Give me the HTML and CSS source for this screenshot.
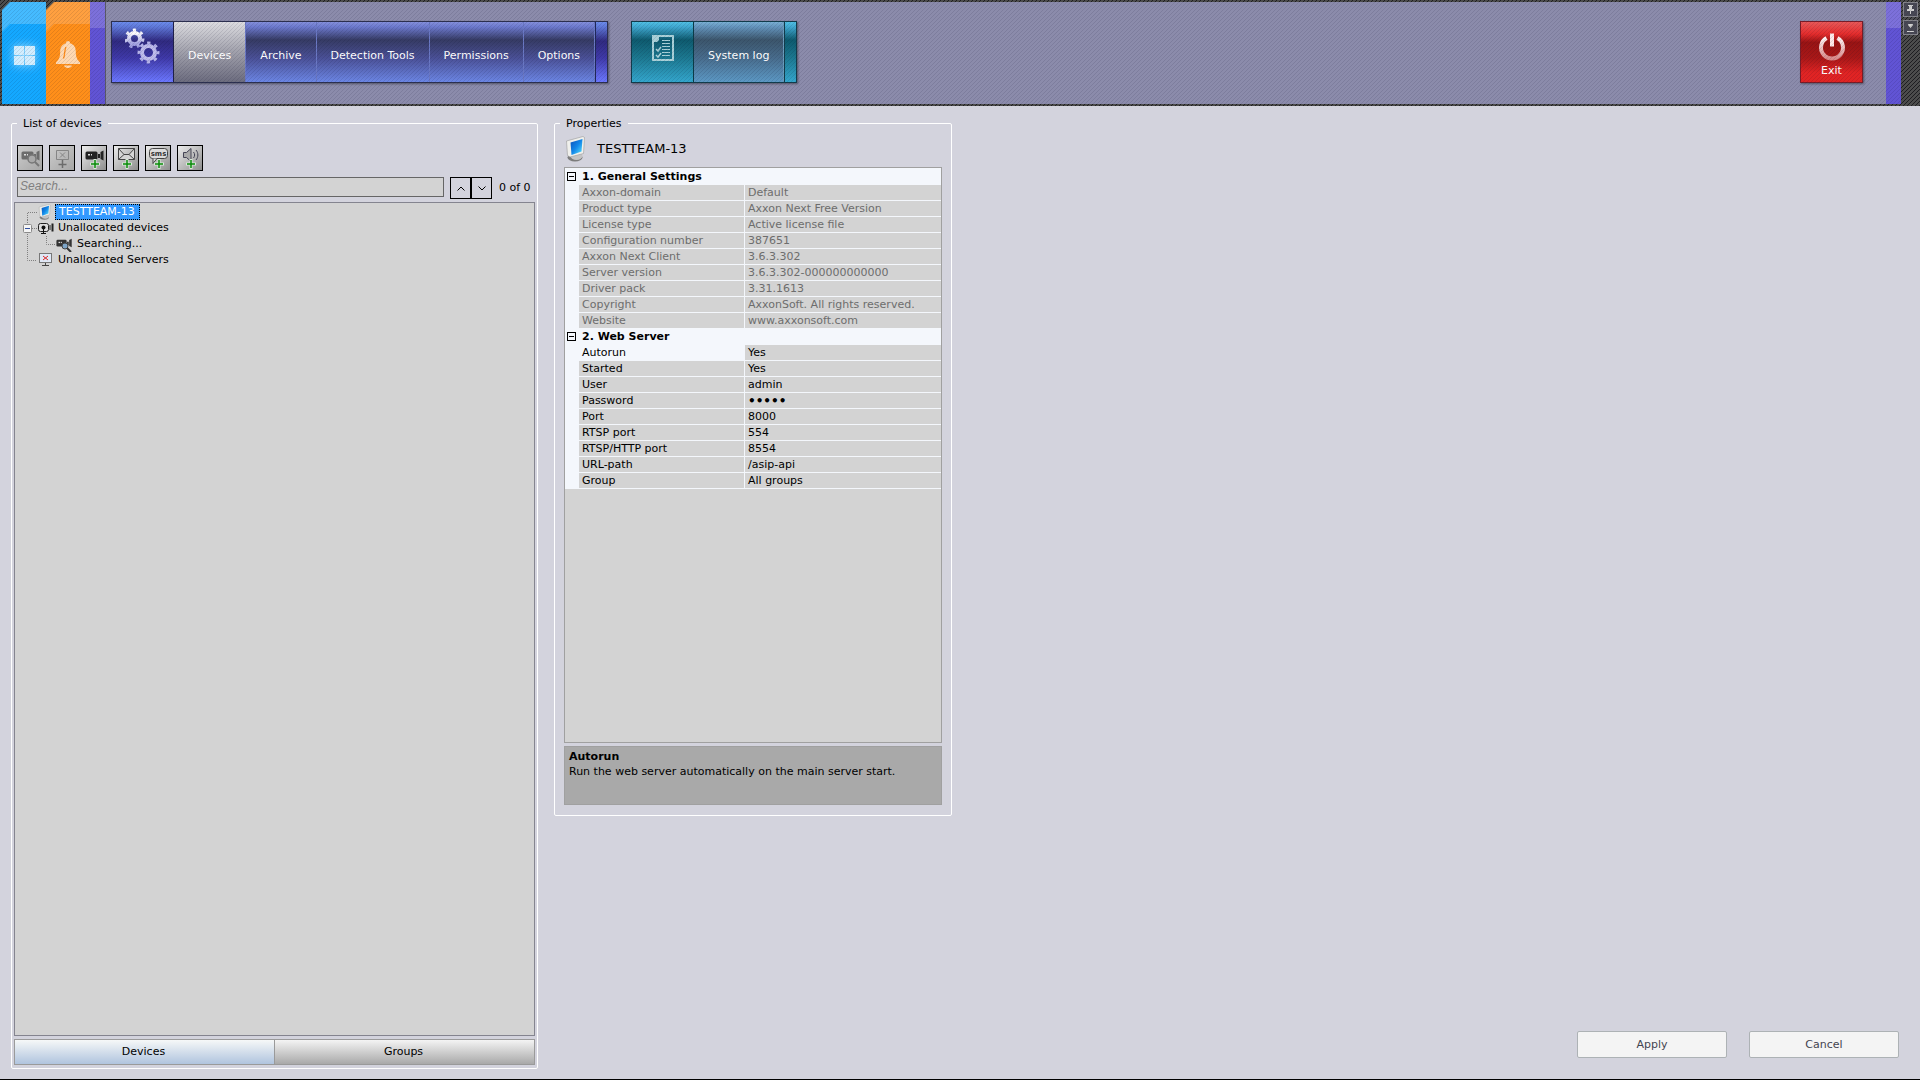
FILE: index.html
```html
<!DOCTYPE html>
<html lang="en">
<head>
  <meta charset="UTF-8"/>
  <meta name="viewport" content="width=device-width, initial-scale=1"/>
  <title>Axxon Next - Settings</title>
  <link rel="stylesheet" href="styles.css">
</head>
<body>
  <svg class="defs" width="0" height="0" aria-hidden="true">
    <defs>
      <linearGradient id="screen" x1="0" y1="0" x2="1" y2="1">
        <stop offset="0" stop-color="#0a4fb8"/><stop offset="0.5" stop-color="#1287e8"/><stop offset="1" stop-color="#5fe8ff"/>
      </linearGradient>
      <linearGradient id="gearFill" x1="0" y1="0" x2="0" y2="1">
        <stop offset="0" stop-color="#ffffff"/><stop offset="1" stop-color="#9f9fe0"/>
      </linearGradient>
      <linearGradient id="powerFill" x1="0" y1="0" x2="0" y2="1">
        <stop offset="0" stop-color="#fff4f4"/><stop offset="1" stop-color="#d98a8a"/>
      </linearGradient>
    </defs>
    <symbol id="server" viewBox="0 0 20 26">
      <ellipse cx="9" cy="21.500" rx="7.500" ry="4" fill="#7c7c7c"/>
      <ellipse cx="10.500" cy="20" rx="6" ry="4" fill="#c4c4c4"/>
      <path d="M0.500 5 L17 0.500 L18.500 1.500 L17.500 17.500 L4 21 L1.500 19.500 Z" fill="#f0f0ec" stroke="#9a9a9a" stroke-width="0.600"/>
      <path d="M4.500 6.500 L16.500 3 L15.500 15.500 L5.500 19 Z" fill="url(#screen)"/>
    </symbol>
    <symbol id="cam" viewBox="0 0 20 12">
      <rect x="0.500" y="1.500" width="12" height="8" rx="1.500"/>
      <path d="M13 4 L15 4 L15 8 L13 8 Z M15.500 2 L18.500 0.500 L18.500 10.500 L15.500 9 Z"/>
      <rect x="3" y="4" width="2" height="1.500" fill="#ddd"/><rect x="6" y="4" width="1" height="1.500" fill="#ddd"/>
    </symbol>
    <symbol id="plus" viewBox="0 0 10 10">
      <path d="M5 0 V10 M0 5 H10" stroke="#d8ead8" stroke-width="3"/>
      <path d="M5 1 V9 M1 5 H9" stroke="#0a8a0a" stroke-width="1.500"/>
    </symbol>
  </svg>

  <header class="topbar">
    <button class="tab tab-layouts" aria-label="Layouts">
      <svg width="40" height="40" viewBox="-1 -2 40 40"><path d="M9 9h10v9H9zM20 9h10v9H20zM9 19h10v9H9zM20 19h10v9H20z" fill="#d3eeff"/></svg>
    </button>
    <button class="tab tab-alarms" aria-label="Alarms">
      <svg width="26" height="28" viewBox="0 0 26 28"><path d="M13 0c1.500 0 2.300 1 2 2.300 4 1 5.700 4.200 5.800 8.200 0 5 1 8 4.200 11V23H1v-1.500c3.200-3 4.200-6 4.200-11 .1-4 1.800-7.200 5.800-8.200C10.700 1 11.500 0 13 0z" fill="#ffd9b3"/><path d="M8.500 17.500c1.800-4 .5-8 2.500-11.500" fill="none" stroke="#ff8c1a" stroke-width="1.300"/><path d="M9 24.500h8c-.6 3.300-7.400 3.300-8 0z" fill="#ffd9b3"/></svg>
    </button>
    <div class="edge"></div>

    <nav class="toolbar-area">
      <div class="menu menu-blue">
        <button class="menu-icon" aria-label="Settings">
          <svg width="36" height="36" viewBox="1 0 36 36" fill="none" stroke="url(#gearFill)">
            <circle cx="10.500" cy="10.500" r="5.500" stroke-width="4"/>
            <circle cx="10.500" cy="10.500" r="8" stroke-width="4" stroke-dasharray="3 4.180"/>
            <circle cx="24.500" cy="24.500" r="6.500" stroke-width="4" stroke="#bfbcec"/>
            <circle cx="24.500" cy="24.500" r="9" stroke-width="4" stroke="#b4b2e8" stroke-dasharray="3.200 3.870" stroke-dashoffset="1.600"/>
          </svg>
        </button>
        <button class="menu-item active">Devices</button>
        <button class="menu-item">Archive</button>
        <button class="menu-item">Detection Tools</button>
        <button class="menu-item">Permissions</button>
        <button class="menu-item">Options</button>
        <div class="menu-cap"></div>
      </div>
      <div class="menu menu-teal">
        <button class="menu-icon" aria-label="Log">
          <svg width="22" height="26" viewBox="0 0 22 26">
            <path d="M1 1 H21 V25 H1 Z" fill="none" stroke="#a9d0d8" stroke-width="2"/>
            <path d="M2 2h5v3L5 7H2z" fill="#a9d0d8"/>
            <path d="M10 5.500h8M10 8.500h8M10 11.500h8M10 14.500h8M10 17.500h8M10 20.500h8" stroke="#a9d0d8"/>
            <path d="M4 14l2 2 3-4M4 20l2 2 3-4" fill="none" stroke="#a9d0d8" stroke-width="1.500"/>
          </svg>
        </button>
        <button class="menu-item">System log</button>
        <div class="menu-cap"></div>
      </div>
      <button class="exit">
        <svg width="28" height="28" viewBox="0 0 28 28" fill="none" stroke="url(#powerFill)" stroke-width="4"><path d="M8.500 5 A11 11 0 1 0 19.500 5"/><path d="M12 0.500 h4 v13 h-4 z" fill="#ffe9e9" stroke="none"/></svg>
        Exit
      </button>
    </nav>

    <div class="edge"></div>
    <div class="window-buttons">
      <button aria-label="Pin"><svg width="11" height="11" viewBox="0 0 11 11" fill="#d0d0d0"><path d="M3 1h5v1H7v3h2v2H6v3H5V7H2V5h2V2H3z"/></svg></button>
      <button aria-label="Hide"><svg width="11" height="11" viewBox="0 0 11 11" fill="#d0d0d0"><path d="M3 2h5v1L5.500 6 3 3zM2 9h7v1H2z"/></svg></button>
    </div>
  </header>

  <main>
    <fieldset class="panel devices-panel">
      <legend>List of devices</legend>
      <div class="device-tools">
        <button disabled aria-label="Search for cameras">
          <svg width="24" height="24"><use href="#cam" x="3" y="4" width="20" height="12" fill="#6c6c6c"/><circle cx="14" cy="13" r="4" fill="#a9a9a9" stroke="#777" stroke-width="1.500"/><path d="M17 16l4 4" stroke="#777" stroke-width="2"/></svg>
        </button>
        <button disabled aria-label="Add server">
          <svg width="24" height="24" fill="none" stroke="#858585"><path d="M6.500 4.500h12v9h-12zM10 6.500l5 5M15 6.500l-5 5"/><path d="M12.500 14v8M8.500 18.500h8" stroke="#6c6c6c" stroke-width="1.500"/></svg>
        </button>
        <button aria-label="Add camera">
          <svg width="24" height="24"><use href="#cam" x="3" y="4" width="20" height="12" fill="#222"/><use href="#plus" x="8" y="13" width="10" height="10"/></svg>
        </button>
        <button aria-label="Add e-mail">
          <svg width="24" height="24"><path d="M4.500 2.500h16v11h-16zM4.500 2.500l5.500 6h5l5.500-6M4.500 13.500l5.500-5M20.500 13.500l-5.500-5" fill="#d5d5d5" stroke="#444"/><use href="#plus" x="8" y="13" width="10" height="10"/></svg>
        </button>
        <button aria-label="Add SMS">
          <svg width="24" height="24"><rect x="3.500" y="2.500" width="18" height="10" rx="3" fill="#dcdcdc" stroke="#444"/><path d="M7 12.500v5l4-5" fill="#dcdcdc" stroke="#444"/><text x="12.500" y="10" class="sms">sms</text><use href="#plus" x="8" y="13" width="10" height="10"/></svg>
        </button>
        <button aria-label="Add speaker">
          <svg width="24" height="24"><path d="M5.500 6.500h3l4.500-4v13l-4.500-4h-3z" fill="#aaa" stroke="#445"/><path d="M15.500 6c1.500 2 1.500 4 0 6M18 4c2.500 3 2.500 7 0 10" fill="none" stroke="#445"/><use href="#plus" x="8" y="13" width="10" height="10"/></svg>
        </button>
      </div>
      <div class="search-row">
        <input type="text" class="search" placeholder="Search..." aria-label="Search">
        <div class="search-nav">
          <button aria-label="Previous"><svg width="8" height="5" viewBox="0 0 8 5"><path d="M0.500 4.500L4 1l3.500 3.500" fill="none" stroke="#000"/></svg></button>
          <button aria-label="Next"><svg width="8" height="5" viewBox="0 0 8 5"><path d="M0.500 0.500L4 4 7.500 0.500" fill="none" stroke="#000"/></svg></button>
        </div>
        <span class="search-count">0 of 0</span>
      </div>
      <ul class="tree" role="tree">
        <li role="treeitem" aria-selected="true">
          <svg class="lines" width="22" height="16"><path d="M12.500 16V8.500H24"/></svg>
          <svg width="18" height="16"><use href="#server" x="1" y="0" width="14" height="16"/></svg>
          <span class="node selected">TESTTEAM-13</span>
        </li>
        <li role="treeitem">
          <svg class="lines" width="22" height="16"><path d="M12.500 0V16M17 8.500H22"/><rect class="box" x="8.500" y="4.500" width="8" height="8" rx="1"/><path class="minus" d="M10 8.500h5"/></svg>
          <svg width="18" height="16"><rect x="1.500" y="3.500" width="10" height="8" rx="2" fill="#ddd" stroke="#222"/><path d="M13 5v5" stroke="#222"/><path d="M15.500 3.500v8" stroke="#222" stroke-width="2"/><circle cx="6.500" cy="7.500" r="2" fill="#111"/><path d="M6.500 8v5M4 13.500h5" stroke="#111"/></svg>
          <span class="node">Unallocated devices</span>
        </li>
        <li role="treeitem">
          <svg class="lines" width="41" height="16"><path d="M12.500 0V16M31.500 0V8.500H41"/></svg>
          <svg width="18" height="16"><use href="#cam" x="0" y="2" width="17" height="11" fill="#333"/><circle cx="9" cy="10" r="3" fill="#7da5c8" stroke="#444"/><path d="M11 12l4 4" stroke="#333" stroke-width="2"/></svg>
          <span class="node">Searching...</span>
        </li>
        <li role="treeitem">
          <svg class="lines" width="22" height="16"><path d="M12.500 0V8.500H24"/></svg>
          <svg width="18" height="16"><rect x="2.500" y="1.500" width="12" height="9" fill="#dfe8f6" stroke="#777"/><path d="M6 4l5 4M11 4l-5 4" stroke="#d22"/><path d="M8.500 11v2M5 13.500h7" stroke="#444"/></svg>
          <span class="node">Unallocated Servers</span>
        </li>
      </ul>
      <div class="switch">
        <button class="on">Devices</button>
        <button>Groups</button>
      </div>
    </fieldset>

    <fieldset class="panel props-panel">
      <legend>Properties</legend>
      <h1 class="props-title">
        <svg width="20" height="26"><use href="#server" width="20" height="26"/></svg>
        TESTTEAM-13
      </h1>
      <div class="grid">
        <table>
          <colgroup><col class="col-gutter"><col class="col-name"><col></colgroup>
          <tbody class="readonly">
            <tr class="category"><td><button class="fold" aria-label="Collapse"></button></td><th colspan="2">1. General Settings</th></tr>
            <tr><td></td><th>Axxon-domain</th><td>Default</td></tr>
            <tr><td></td><th>Product type</th><td>Axxon Next Free Version</td></tr>
            <tr><td></td><th>License type</th><td>Active license file</td></tr>
            <tr><td></td><th>Configuration number</th><td>387651</td></tr>
            <tr><td></td><th>Axxon Next Client</th><td>3.6.3.302</td></tr>
            <tr><td></td><th>Server version</th><td>3.6.3.302-000000000000</td></tr>
            <tr><td></td><th>Driver pack</th><td>3.31.1613</td></tr>
            <tr><td></td><th>Copyright</th><td>AxxonSoft. All rights reserved.</td></tr>
            <tr><td></td><th>Website</th><td>www.axxonsoft.com</td></tr>
          </tbody>
          <tbody>
            <tr class="category"><td><button class="fold" aria-label="Collapse"></button></td><th colspan="2">2. Web Server</th></tr>
            <tr class="current"><td></td><th>Autorun</th><td>Yes</td></tr>
            <tr><td></td><th>Started</th><td>Yes</td></tr>
            <tr><td></td><th>User</th><td>admin</td></tr>
            <tr><td></td><th>Password</th><td class="secret">•••••</td></tr>
            <tr><td></td><th>Port</th><td>8000</td></tr>
            <tr><td></td><th>RTSP port</th><td>554</td></tr>
            <tr><td></td><th>RTSP/HTTP port</th><td>8554</td></tr>
            <tr><td></td><th>URL-path</th><td>/asip-api</td></tr>
            <tr><td></td><th>Group</th><td>All groups</td></tr>
          </tbody>
        </table>
      </div>
      <div class="help">
        <h2>Autorun</h2>
        <p>Run the web server automatically on the main server start.</p>
      </div>
    </fieldset>

    <div class="actions">
      <button>Apply</button>
      <button>Cancel</button>
    </div>
  </main>
</body>
</html>
```

FILE: styles.css
```css
*, *::before, *::after { box-sizing: border-box; margin: 0; padding: 0; }
html, body { height: 100%; }
body {
  display: flex; flex-direction: column; background: #d3d3dd; color: #000;
  font: 11px/15px Verdana, "DejaVu Sans", sans-serif; border-bottom: 1px solid #000;
}
button, input { font: inherit; color: inherit; border: 0; border-radius: 0; background: none; }
button { cursor: pointer; }
svg { display: block; flex: none; }
.defs { position: absolute; }

/* top bar */
.topbar {
  position: relative; display: flex; height: 106px; padding: 2px;
  background: linear-gradient(135deg, #202020 12.5%, #4c4c4c 12.5% 50%, #202020 50% 62.5%, #4c4c4c 62.5%) 0 0 / 4px 4px;
}
/* diagonal hatching over the whole bar */
.topbar::after {
  content: ''; position: absolute; inset: 0; pointer-events: none;
  background: linear-gradient(135deg, rgba(0,0,30,0.1) 12.5%, transparent 12.5% 50%, rgba(0,0,30,0.1) 50% 62.5%, transparent 62.5%);
  background-size: 4px 4px;
}
.tab {
  position: relative; width: 44px; display: flex; align-items: center; justify-content: center;
  padding-top: 4px; clip-path: polygon(8px 0, 100% 0, 100% 100%, 0 100%, 0 8px);
}
.tab::before {
  content: ''; position: absolute; inset: 22px 0 0 0;
  clip-path: polygon(8px 0, 100% 0, 100% 100%, 0 100%, 0 8px);
}
.tab svg { position: relative; }
.tab-layouts { background: #45bbff; }
.tab-layouts::before { background: #14a8ff; }
.tab-layouts svg { filter: drop-shadow(0 0 5px #a8e0ff); }
.tab-alarms { background: #ffa040; }
.tab-alarms::before { background: #ff8f1a; }
.edge { width: 15px; background: linear-gradient(#7c70da 26px, #6154d4 26px); }
.toolbar-area {
  flex: 1; display: flex; align-items: flex-start; gap: 23px;
  padding: 19px 23px 0 5px; background: #8b8bab; border-left: 1px solid #5a5a68;
}

.menu { display: flex; height: 62px; border: 1px solid #2c3050; box-shadow: 1px 1px 2px rgba(0,0,0,0.4); color: #fff; }
.menu-icon { width: 62px; display: flex; justify-content: center; padding-top: 6px; border-right: 1px solid #20204a; }
.menu-item { padding: 6px 14px 0; border-right: 1px solid #6a78c4; }
.menu-item.active { background: linear-gradient(#dcdce0, #a0a0ab 50%, #6c6c7e); }
.menu-cap { width: 12px; border-left: 1px solid #20285a; }
.menu-blue { background: linear-gradient(#8490dc, #6d7ace 8%, #363b64 30%, #4a5096 60%, #6c86e4); }
.menu-blue .menu-icon, .menu-blue .menu-cap { background: linear-gradient(#6c8cec, #5f78d8 8%, #302a80 32%, #3f39a8 60%, #6c78ff); }
.menu-teal { border-color: #123c4c; background: linear-gradient(#7ab0d4, #6494bc 8%, #3c566c 30%, #486c8c 60%, #5c98c4); }
.menu-teal .menu-icon { padding-top: 13px; border-color: #0c3c48; }
.menu-teal .menu-item { border-color: #6a9cbc; }
.menu-teal .menu-cap { border-color: #123c4c; }
.menu-teal .menu-icon, .menu-teal .menu-cap { background: linear-gradient(#50c0e4, #40a8d0 8%, #0e5a6e 30%, #1c7890 60%, #34a6cc); }

.exit {
  width: 63px; height: 62px; margin-left: auto; display: flex; flex-direction: column; align-items: center;
  padding-top: 11px; gap: 2px; color: #fff; border: 1px solid #7a1c28;
  background: linear-gradient(#e85858, #e42c2c 20%, #981414 34%, #a81818 60%, #e02424 85%);
  box-shadow: 1px 1px 2px rgba(0,0,0,0.4);
}
.window-buttons { display: flex; flex-direction: column; gap: 3px; padding-left: 2px; }
.window-buttons button {
  width: 15px; height: 15px; display: flex; align-items: center; justify-content: center;
  background: #484854; border: 1px solid #85858c;
}

/* panels */
main { flex: 1; min-height: 0; display: flex; align-items: flex-start; gap: 16px; padding: 10px 21px 10px 11px; }
.panel { min-width: 0; border: 1px solid #fff; border-radius: 2px; }
.panel legend { padding: 0 6px; }

.devices-panel { width: 527px; height: 100%; display: flex; flex-direction: column; padding: 14px 2px 3px; }
.devices-panel legend { margin-left: 3px; }
.device-tools { display: flex; gap: 6px; padding: 0 3px 6px; }
.device-tools button { width: 26px; height: 26px; border: 1px solid #000; background: linear-gradient(135deg, #ececec, #8e8e8e); }
.device-tools button:disabled { background: linear-gradient(135deg, #cccccc, #a6a6a6); }
.sms { font: bold 7px "DejaVu Sans", sans-serif; text-anchor: middle; fill: #333; }
.search-row { display: flex; align-items: flex-start; padding: 0 0 3px 3px; }
.search { flex: 1; min-width: 0; height: 20px; padding: 0 2px 2px; border: 1px solid #666; background: #d3d3d3; }
.search::placeholder { color: #808080; font: italic 12px "Liberation Sans", Arial, sans-serif; }
.search-nav { display: flex; margin: 0 7px 0 6px; }
.search-nav button { width: 21px; height: 22px; display: flex; align-items: center; justify-content: center; border: 1px solid #000; }
.search-count { width: 36px; line-height: 22px; white-space: nowrap; }

.tree { flex: 1; list-style: none; padding-top: 1px; background: #d3d3d3; border: 1px solid #84848f; }
.tree li { display: flex; height: 16px; }
.node { padding: 0 3px; line-height: 15px; white-space: nowrap; }
.node.selected { padding: 0 5px 0 4px; color: #fff; background: #3399ff; outline: 1px dotted #000; outline-offset: -1px; line-height: 16px; }
.lines { fill: none; stroke: #808080; stroke-dasharray: 1 1; }
.lines .box { fill: #f4f4f4; stroke: #8a8a8a; stroke-dasharray: none; }
.lines .minus { stroke: #3050a0; stroke-dasharray: none; }

.switch { display: flex; height: 26px; margin-top: 3px; border: 1px solid #9a9a9a; }
.switch button { flex: 1; padding: 0 2px 2px 0; background: linear-gradient(#f4f4f4, #a9a9a9); }
.switch .on { background: linear-gradient(#f6f8f8, #b0c4de); border-right: 1px solid #9a9a9a; }

.props-panel { width: 398px; padding: 0 9px 10px; }
.props-panel legend { margin-left: -4px; }
.props-title { display: flex; align-items: center; gap: 11px; height: 36px; padding-left: 2px; font-size: 13px; font-weight: normal; line-height: 30px; }
.grid { height: 576px; overflow: auto; background: #d3d3d3; border: 1px solid #a0a0a0; }
table { width: 100%; table-layout: fixed; border-collapse: separate; border-spacing: 0; border-top: 1px solid #f4f7fc; }
.col-gutter { width: 14px; }
.col-name { width: 166px; }
th, td { height: 16px; padding: 1px 0 0 3px; line-height: 14px; text-align: left; font-weight: normal; white-space: nowrap; border-bottom: 1px solid #f4f7fc; }
th { border-right: 1px solid #f4f7fc; }
.category, .current th, td:first-child { background: #f4f7fc; }
.category th { font-weight: bold; color: #000; border-right: 0; }
td:first-child { padding: 0 0 0 2px; }
.readonly { color: #6d6d6d; }
.secret { font-size: 12px; font-weight: bold; }
.fold { display: block; width: 9px; height: 9px; border: 1px solid #000; background: linear-gradient(#000, #000) center / 5px 1px no-repeat; }
.help { height: 59px; margin-top: 3px; padding: 3px 4px; background: #a9a9a9; border: 1px solid #a0a0a0; }
.help h2 { font-size: 11px; line-height: 14px; }

.actions { align-self: flex-end; margin-left: auto; display: flex; gap: 22px; padding-bottom: 11px; }
.actions button { width: 150px; height: 27px; color: #444450; background: #f4f4f4; border: 1px solid #adb2b5; border-radius: 2px; }
```
